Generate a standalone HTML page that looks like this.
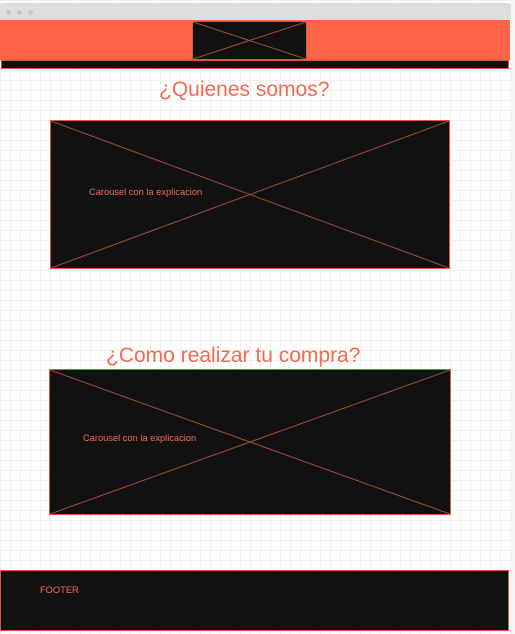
<!DOCTYPE html>
<html><head><style>
*{margin:0;padding:0;box-sizing:border-box}
body{width:515px;height:634px;overflow:hidden;background:#f4f4f4;font-family:"Liberation Sans",sans-serif;position:relative}
.page{position:absolute;left:0;top:0;width:510px;height:634px;background-color:#fff;
background-image:linear-gradient(#f1f1f1 1px,transparent 1px),linear-gradient(90deg,#f1f1f1 1px,transparent 1px);background-size:10px 10px}
.top{position:absolute;left:0;top:3px;width:511px;height:17px;background:#dedede;border-radius:3px 3px 0 0}
.dot{position:absolute;top:7px;width:5px;height:5px;border-radius:50%;background:#c8c8c8}
.hdr{position:absolute;left:0;top:20px;width:510px;height:40px;background:#ff6446}
.strip{position:absolute;left:1px;top:60px;width:508px;height:9px;background:#111;border:1px solid #d9533b}
.ph{position:absolute;background:#111;border:1px solid #e0553d}
.ph svg{position:absolute;left:0;top:0;width:100%;height:100%}
.t{position:absolute;color:#f56a4f;font-size:21px;white-space:nowrap}
.s{position:absolute;color:#f56a4f;font-size:9.3px}
.foot{position:absolute;left:0;top:570px;width:509px;height:61px;background:#111;border:1px solid #e0553d}
</style></head><body>
<div class="page"></div>
<div class="top"><div class="dot" style="left:6px"></div><div class="dot" style="left:17px"></div><div class="dot" style="left:28px"></div></div>
<div class="hdr"></div>
<div class="ph" style="left:192px;top:21px;width:115px;height:39px"><svg viewBox="0 0 100 100" preserveAspectRatio="none"><path d="M0 0L100 100M100 0L0 100" stroke="#a04a3a" stroke-width="1" vector-effect="non-scaling-stroke"/></svg></div>
<div class="strip"></div>
<div class="t" style="left:159px;top:78px">¿Quienes somos?</div>
<div class="ph" style="left:50px;top:120px;width:400px;height:149px"><svg viewBox="0 0 100 100" preserveAspectRatio="none"><path d="M0 0L100 100M100 0L0 100" stroke="#a04a3a" stroke-width="1" vector-effect="non-scaling-stroke"/></svg></div>
<div class="s" style="left:89px;top:187px">Carousel con la explicacion</div>
<div class="t" style="left:106px;top:344px">¿Como realizar tu compra?</div>
<div class="ph" style="left:49px;top:369px;width:402px;height:146px"><svg viewBox="0 0 100 100" preserveAspectRatio="none"><path d="M0 0L100 100M100 0L0 100" stroke="#a04a3a" stroke-width="1" vector-effect="non-scaling-stroke"/></svg></div>
<div class="s" style="left:83px;top:433px">Carousel con la explicacion</div>
<div class="foot"></div>
<div class="s" style="left:40px;top:585px">FOOTER</div>
</body></html>
